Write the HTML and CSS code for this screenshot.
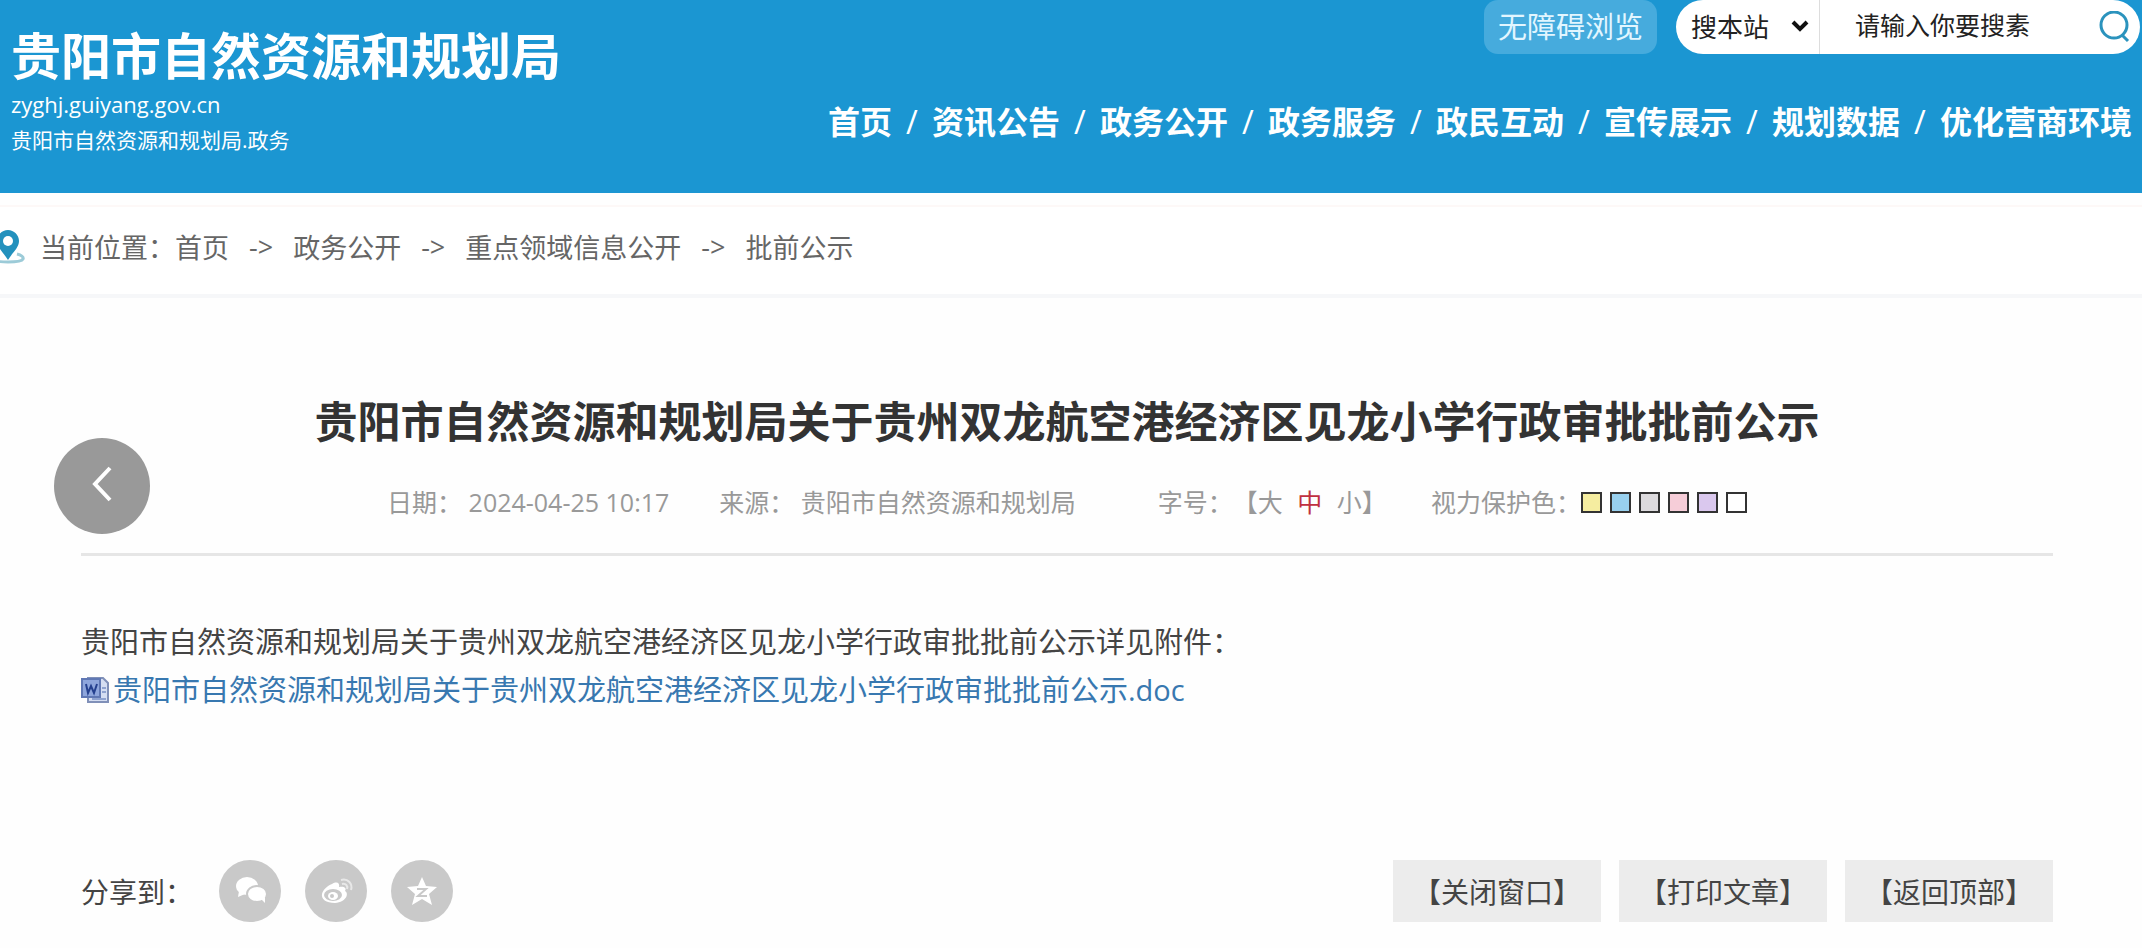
FILE: index.html
```html
<!DOCTYPE html>
<html lang="zh-CN">
<head>
  <meta charset="UTF-8" />
  <meta name="viewport" content="width=device-width, initial-scale=1.0" />
  <title>贵阳市自然资源和规划局</title>
  <link rel="stylesheet" href="styles.css">
</head>
<body>
  <header class="header">
    <div class="brand">
      <div class="brand-name">贵阳市自然资源和规划局</div>
      <div class="brand-url">zyghj.guiyang.gov.cn</div>
      <div class="brand-sub">贵阳市自然资源和规划局.政务</div>
    </div>

    <div class="header-right">
      <div class="tools">
        <a class="barrier-free" href="#">无障碍浏览</a>
        <form class="search">
          <div class="search-scope">
            <select aria-label="搜索范围">
              <option>搜本站</option>
            </select>
            <svg class="caret" viewBox="0 0 18 12"><path d="M2 2l7 7 7-7" /></svg>
          </div>
          <input type="text" aria-label="搜索" placeholder="请输入你要搜素" />
          <button type="button" class="search-button" aria-label="搜索">
            <svg viewBox="0 0 32 32"><circle cx="15" cy="14" r="13" /><path d="M23 24l6 6" /></svg>
          </button>
        </form>
      </div>

      <nav class="nav">
        <a href="#">首页</a><span>/</span>
        <a href="#">资讯公告</a><span>/</span>
        <a href="#">政务公开</a><span>/</span>
        <a href="#">政务服务</a><span>/</span>
        <a href="#">政民互动</a><span>/</span>
        <a href="#">宣传展示</a><span>/</span>
        <a href="#">规划数据</a><span>/</span>
        <a href="#">优化营商环境</a>
      </nav>
    </div>
  </header>

  <div class="crumbs">
    <svg class="pin" viewBox="0 0 36 36">
      <path class="pin-ring" d="M9 25c-5 1-7 3-6 5 2 4 28 4 30 0 1-2-2-4-6-5" />
      <path class="pin-body" d="M18 1c-6 0-11 5-11 11 0 7 7 12 11 19 4-7 11-12 11-19 0-6-5-11-11-11z" />
      <circle cx="18" cy="12" r="5" fill="#fff" />
    </svg>
    <span>当前位置：</span>
    <a href="#">首页</a><i>-&gt;</i>
    <a href="#">政务公开</a><i>-&gt;</i>
    <a href="#">重点领域信息公开</a><i>-&gt;</i>
    <a href="#">批前公示</a>
  </div>

  <main class="article">
    <button type="button" class="prev" aria-label="上一页">
      <svg viewBox="0 0 24 38"><path d="M20 3L5 19l15 16" /></svg>
    </button>

    <h1>贵阳市自然资源和规划局关于贵州双龙航空港经济区见龙小学行政审批批前公示</h1>

    <div class="meta">
      <span class="date">日期： 2024-04-25 10:17</span>
      <span class="source">来源： 贵阳市自然资源和规划局</span>
      <span class="size">字号：【<a href="#">大</a> <a href="#" class="current">中</a> <a href="#">小</a>】</span>
      <span>视力保护色：</span>
      <div class="swatches">
        <button type="button" class="yellow" aria-label="黄色"></button>
        <button type="button" class="blue" aria-label="蓝色"></button>
        <button type="button" class="gray" aria-label="灰色"></button>
        <button type="button" class="pink" aria-label="粉色"></button>
        <button type="button" class="purple" aria-label="紫色"></button>
        <button type="button" class="white" aria-label="白色"></button>
      </div>
    </div>

    <div class="content">
      <p>贵阳市自然资源和规划局关于贵州双龙航空港经济区见龙小学行政审批批前公示详见附件：</p>
      <p class="file">
        <svg viewBox="0 0 28 28">
          <path d="M7 2h15l5 5v19H7z" fill="#d5def2" stroke="#8090b8" stroke-width="2" />
          <path d="M21 12h4M21 16h4M11 23h14" stroke="#8fa3d0" stroke-width="2" />
          <rect x="1" y="3" width="18" height="18" fill="#8ea6dc" stroke="#6078b4" stroke-width="2" />
          <path d="M5 8l2 9 3-7 3 7 3-9" fill="none" stroke="#24408e" stroke-width="2" />
        </svg>
        <a href="#">贵阳市自然资源和规划局关于贵州双龙航空港经济区见龙小学行政审批批前公示.doc</a>
      </p>
    </div>

    <div class="bottom">
      <span class="share-label">分享到：</span>
      <div class="share">
        <a href="#" aria-label="微信">
          <svg viewBox="0 0 62 62">
            <ellipse cx="28" cy="26" rx="11" ry="9" />
            <path d="M20 31l-1 6 7-3z" />
            <ellipse cx="38" cy="34" rx="10" ry="8" stroke="#c9c9c9" />
            <path d="M42 39l4 4v-6z" />
          </svg>
        </a>
        <a href="#" aria-label="微博">
          <svg viewBox="0 0 62 62">
            <path d="M27 24c5-3 8-1 7 3 5-1 8 1 6 4 4 2 2 11-10 12-9 0-14-4-13-9 1-4 5-8 10-10z" />
            <ellipse cx="28" cy="35" rx="9" ry="6" fill="#c9c9c9" />
            <ellipse cx="28" cy="36" rx="5" ry="4" />
            <circle cx="27" cy="36" r="2" fill="#c9c9c9" />
            <path class="wave" d="M37 24c4-1 6 2 5 5M36 20c7-2 12 4 10 10" />
          </svg>
        </a>
        <a href="#" aria-label="QQ空间">
          <svg viewBox="0 0 62 62">
            <path d="M31 17l4 9 11 1-8 7 3 11-10-6-10 6 3-11-8-7 11-1z" />
            <path class="zone" d="M26 29h9l-8 7h9" />
          </svg>
        </a>
      </div>
      <div class="actions">
        <button type="button">【关闭窗口】</button>
        <button type="button">【打印文章】</button>
        <button type="button">【返回顶部】</button>
      </div>
    </div>
  </main>
</body>
</html>
```
FILE: styles.css
```css
* {
  box-sizing: border-box;
}

body {
  margin: 0;
  font-family: "Open Sans", "Noto Sans CJK SC", sans-serif;
  background-color: #fefefe;
  color: #444;
}

a {
  color: inherit;
  text-decoration: none;
}

button,
input,
select {
  font-family: inherit;
  border: none;
  background: none;
  padding: 0;
}

.header {
  display: flex;
  justify-content: space-between;
  background-color: #1b96d2;
  color: #fff;
  padding-bottom: 33px;
}

.brand {
  padding: 24px 0 0 11px;
}

.brand-name {
  font-size: 50px;
  font-weight: bold;
  line-height: 64px;
}

.brand-url {
  font-size: 22px;
  line-height: 32px;
}

.brand-sub {
  font-size: 21px;
  line-height: 40px;
}

.tools {
  display: flex;
  justify-content: flex-end;
  gap: 19px;
  padding-right: 2px;
}

.barrier-free {
  height: 54px;
  padding: 0 14px;
  border-radius: 14px;
  background-color: #46abdd;
  color: #e2f6ff;
  font-size: 29px;
  line-height: 54px;
}

.search {
  display: flex;
  width: 464px;
  height: 54px;
  border-radius: 27px;
  background-color: #fff;
}

.search-scope {
  position: relative;
  width: 144px;
  border-right: 1px solid #ddd;
}

.search-scope select {
  appearance: none;
  width: 100%;
  height: 100%;
  padding-left: 15px;
  font-size: 26px;
  color: #222;
}

.caret {
  position: absolute;
  right: 10px;
  top: 20px;
  width: 18px;
  height: 12px;
  fill: none;
  stroke: #111;
  stroke-width: 4;
  pointer-events: none;
}

.search input {
  flex: 1;
  min-width: 0;
  padding: 0 0 4px 35px;
  font-size: 25px;
  color: #222;
}

.search input::placeholder {
  color: #222;
}

.search-button {
  width: 41px;
}

.search-button svg {
  display: block;
  width: 32px;
  height: 32px;
  fill: none;
  stroke: #2b93bd;
  stroke-width: 3;
}

.nav {
  display: flex;
  padding: 44px 10px 0 0;
  font-size: 32px;
  font-weight: bold;
  line-height: 48px;
}

.nav span {
  width: 40px;
  text-align: center;
  font-weight: normal;
}

.crumbs {
  display: flex;
  align-items: center;
  height: 93px;
  margin-top: 12px;
  padding-bottom: 8px;
  border-top: 2px solid #fdf8f7;
  border-bottom: 4px solid #f6f7f9;
  background-color: #fff;
  color: #666;
  font-size: 27px;
}

.crumbs i {
  margin: 0 20px;
  font-style: normal;
}

.pin {
  width: 36px;
  height: 36px;
  margin: 0 14px 0 -10px;
}

.pin-ring {
  fill: none;
  stroke: #9ccbd8;
  stroke-width: 3;
}

.pin-body {
  fill: #2391bd;
}

.article {
  position: relative;
  padding: 92px 89px 23px 81px;
}

.prev {
  position: absolute;
  left: 54px;
  top: 140px;
  width: 96px;
  height: 96px;
  border-radius: 50%;
  background-color: #999;
}

.prev svg {
  width: 24px;
  height: 38px;
  fill: none;
  stroke: #fff;
  stroke-width: 4;
}

h1 {
  margin: 0;
  text-align: center;
  font-size: 43px;
  line-height: 64px;
  color: #333;
}

.meta {
  display: flex;
  align-items: center;
  justify-content: center;
  padding: 28px 0 31px;
  border-bottom: 3px solid #e6e6e6;
  color: #999;
  font-size: 25px;
  line-height: 40px;
  white-space: pre;
  text-spacing-trim: space-all;
}

.date {
  margin-right: 50px;
}

.source {
  margin-right: 82px;
}

.size {
  margin-right: 44px;
}

.current {
  margin: 0 8px;
  color: #c03040;
}

.swatches {
  display: flex;
  gap: 8px;
}

.swatches button {
  width: 21px;
  height: 21px;
  border: 2px solid #333;
}

.yellow {
  background-color: #f5eda0;
}

.blue {
  background-color: #98d0ee;
}

.gray {
  background-color: #dcdadd;
}

.pink {
  background-color: #f6cdd8;
}

.purple {
  background-color: #dac8ee;
}

.white {
  background-color: #fff;
}

.content {
  padding: 62px 0 146px;
  font-size: 29px;
  line-height: 48px;
}

.content p {
  margin: 0;
}

.file {
  display: flex;
  align-items: center;
  gap: 4px;
  color: #3878b0;
}

.file svg {
  width: 28px;
  height: 28px;
}

.bottom {
  display: flex;
  align-items: center;
  font-size: 28px;
}

.share-label {
  width: 138px;
}

.share {
  display: flex;
  gap: 24px;
}

.share a {
  width: 62px;
  height: 62px;
  border-radius: 50%;
  background-color: #c9c9c9;
}

.share svg {
  display: block;
  fill: #fff;
  stroke-width: 2;
}

.share .wave,
.share .zone {
  fill: none;
  stroke: #e8e8e8;
}

.share .zone {
  stroke: #c9c9c9;
}

.actions {
  display: flex;
  gap: 18px;
  margin-left: auto;
}

.actions button {
  height: 62px;
  padding: 0 20px;
  background-color: #ececec;
  color: #444;
  font-size: 28px;
}
```
